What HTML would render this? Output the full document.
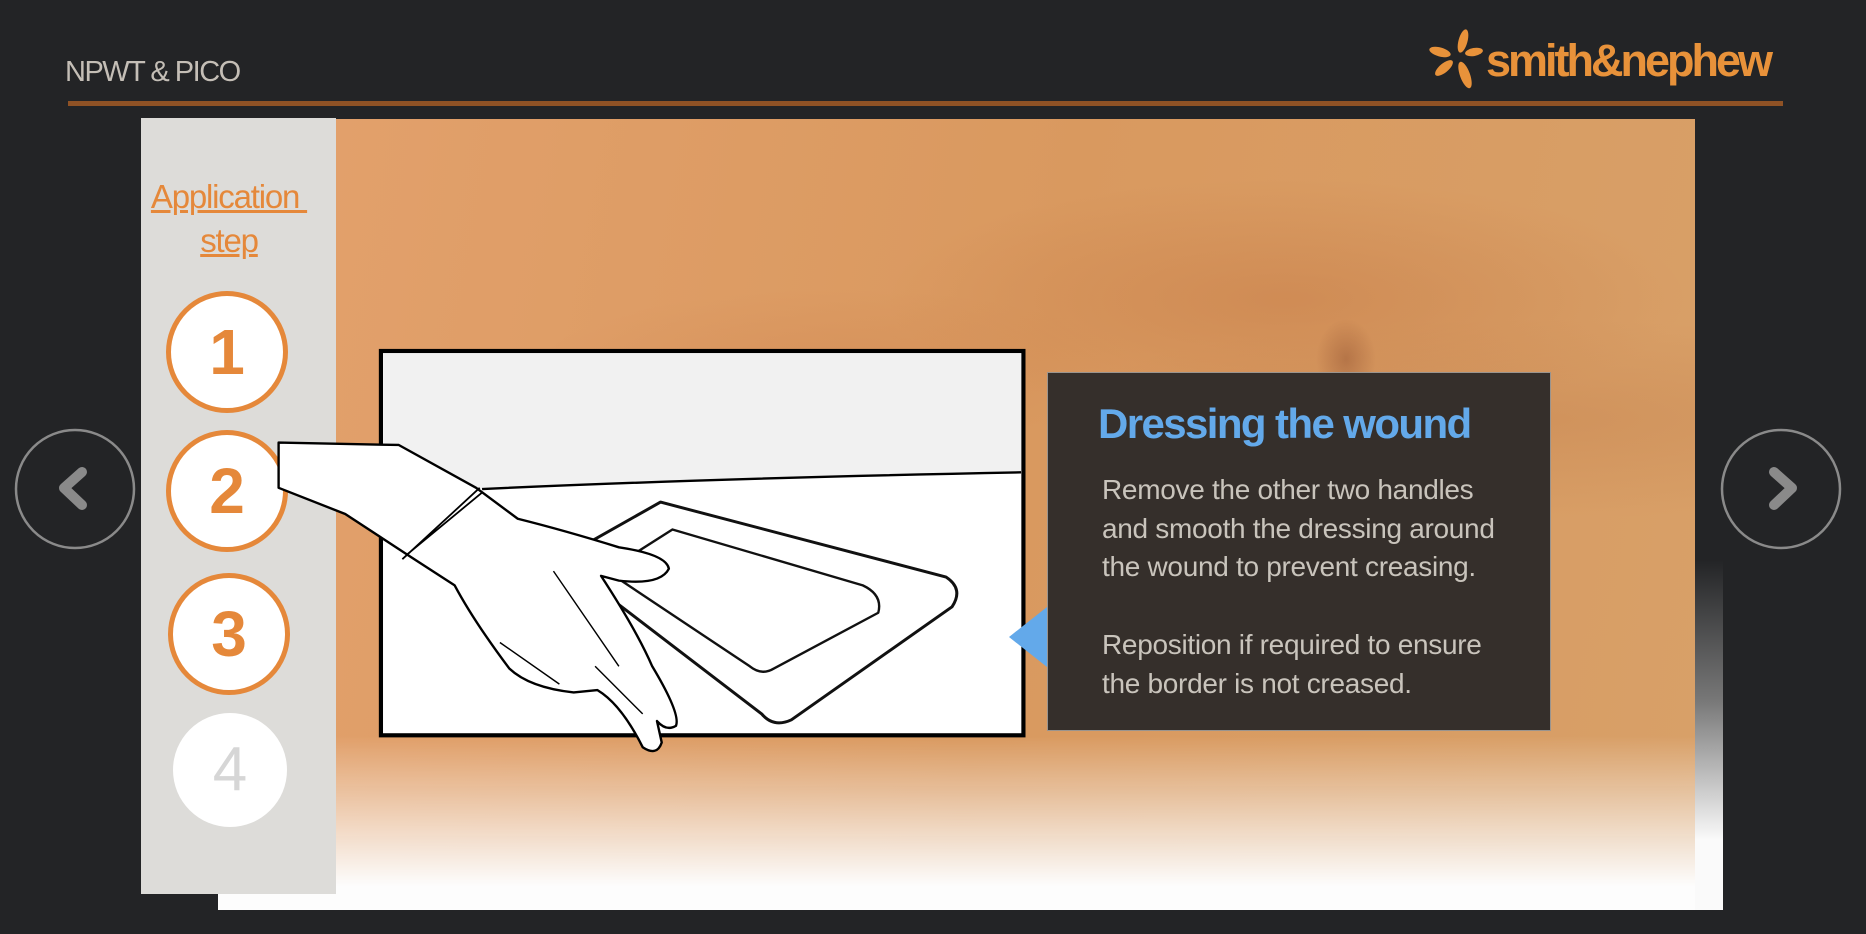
<!DOCTYPE html>
<html><head><meta charset="utf-8"><style>
*{margin:0;padding:0;box-sizing:border-box}
body{width:1866px;height:934px;background:#232426;position:relative;overflow:hidden;font-family:"Liberation Sans",sans-serif}
.abs{position:absolute}
</style></head><body>
<div class="abs" style="left:65px;top:56px;font-size:29px;color:#c4beb6;letter-spacing:-1.5px">NPWT &amp; PICO</div>
<div class="abs" style="left:68px;top:101px;width:1715px;height:5px;background:#8f5225"></div>
<svg class="abs" style="left:1420px;top:25px" width="80" height="70" viewBox="0 0 80 70">
<g fill="#e8923a">
<ellipse cx="43" cy="16" rx="4.5" ry="12" transform="rotate(15 43 16)"/>
<ellipse cx="20" cy="27" rx="11" ry="4.5" transform="rotate(15 20 27)"/>
<ellipse cx="54" cy="27" rx="9" ry="4" transform="rotate(-10 54 27)"/>
<ellipse cx="24" cy="43" rx="11" ry="4.5" transform="rotate(-40 24 43)"/>
<ellipse cx="45" cy="50" rx="5" ry="14" transform="rotate(-20 45 50)"/>
</g></svg>
<div class="abs" style="left:1486px;top:35px;font-size:45px;font-weight:bold;color:#e8923a;letter-spacing:-3px">smith&amp;nephew</div>

<div class="abs" style="left:218px;top:560px;width:1505px;height:350px;background:#fdfdfd"></div>
<div class="abs" style="left:1695px;top:560px;width:28px;height:350px;background:linear-gradient(#232426,#777 40%,#fafafa 80%)"></div>
<div class="abs" style="left:336px;top:119px;width:1359px;height:791px;background:
radial-gradient(ellipse 400px 120px at 950px 180px,rgba(190,110,60,.35),transparent),
radial-gradient(ellipse 500px 100px at 1200px 300px,rgba(190,120,70,.3),transparent),
radial-gradient(ellipse 300px 80px at 500px 250px,rgba(200,120,70,.25),transparent),
radial-gradient(ellipse 30px 40px at 1010px 240px,rgba(140,80,50,.5),transparent),
linear-gradient(100deg,#e2a06b,#d9995f 50%,#d8a068);
-webkit-mask-image:linear-gradient(#000 78%,transparent 97%);mask-image:linear-gradient(#000 78%,transparent 97%)"></div>

<div class="abs" style="left:141px;top:118px;width:195px;height:776px;background:#dddcd9"></div>
<div class="abs" style="left:144px;top:175px;width:170px;text-align:center;font-size:33px;line-height:44px;color:#e5883a;text-decoration:underline;letter-spacing:-1.2px">Application&nbsp;<br>step</div>
<div class="abs" style="left:166px;top:291px;width:122px;height:122px;border-radius:50%;border:5px solid #e5883a;background:#fff;text-align:center;font-size:64px;line-height:112px;font-weight:bold;color:#e5883a">1</div>
<div class="abs" style="left:166px;top:430px;width:122px;height:122px;border-radius:50%;border:5px solid #e5883a;background:#fff;text-align:center;font-size:64px;line-height:112px;font-weight:bold;color:#e5883a">2</div>
<div class="abs" style="left:168px;top:573px;width:122px;height:122px;border-radius:50%;border:5px solid #e5883a;background:#fff;text-align:center;font-size:64px;line-height:112px;font-weight:bold;color:#e5883a">3</div>
<div class="abs" style="left:173px;top:713px;width:114px;height:114px;border-radius:50%;background:#fff;text-align:center;font-size:62px;line-height:114px;color:#d6d6d6">4</div>

<svg class="abs" style="left:0;top:0" width="1866" height="934" viewBox="0 0 1568 785">
<rect x="320" y="295" width="540" height="323" fill="#fff" stroke="#000" stroke-width="3.5"/>
<path d="M322,297 L858,297 L858,397 Q600,402 405,411 L322,411 Z" fill="#f1f1f1"/>
<path d="M405,411 Q600,402 858,397" fill="none" stroke="#000" stroke-width="2"/>
<path d="M555,422 L795,485 Q810,495 800,510 L665,605 Q650,612 640,600 L470,470 Z" fill="#fff" stroke="#111" stroke-width="2.5" stroke-linejoin="round"/>
<path d="M565,445 L725,492 Q742,500 738,515 L650,562 Q640,568 630,560 L510,480 Z" fill="none" stroke="#111" stroke-width="2" stroke-linejoin="round"/>
<path d="M234,372 L335,374 L400,410 L435,436 Q475,446 520,460 Q560,466 562,478 Q555,492 520,488 L505,484 Q535,530 548,560 Q572,600 568,610 Q560,615 552,606 L556,624 Q552,636 540,628 Q522,592 502,580 L482,582 Q445,578 428,562 Q398,522 382,492 L345,468 L290,432 L234,410 Z" fill="#fff" stroke="#000" stroke-width="2" stroke-linejoin="round"/>
<path d="M338,470 L403,410 M342,466 L405,414" stroke="#000" stroke-width="1.5" fill="none"/>
<path d="M465,480 L520,560 M420,540 L470,575 M500,560 L540,600" stroke="#000" stroke-width="1.2" fill="none"/>
</svg>

<svg class="abs" style="left:1009px;top:607px" width="40" height="60"><path d="M0,30 L38,0 L38,60 Z" fill="#63a9ea"/></svg>
<div class="abs" style="left:1047px;top:372px;width:504px;height:359px;background:#352f2b;border:1px solid #9a948e"></div>
<div class="abs" style="left:1098px;top:400px;font-size:42px;font-weight:bold;color:#63a9ea;letter-spacing:-1.6px">Dressing the wound</div>
<div class="abs" style="left:1102px;top:471px;font-size:28px;line-height:38.7px;color:#c9c4bc;letter-spacing:-0.3px;white-space:nowrap">Remove the other two handles<br>and smooth the dressing around<br>the wound to prevent creasing.<br><br>Reposition if required to ensure<br>the border is not creased.</div>

<svg class="abs" style="left:0;top:420px" width="160" height="140"><circle cx="75" cy="69" r="59" fill="none" stroke="#8a8a8a" stroke-width="2.5"/><path d="M82,52 L64,68 L82,85" fill="none" stroke="#8a8a8a" stroke-width="10" stroke-linecap="round" stroke-linejoin="round"/></svg>
<svg class="abs" style="left:1706px;top:420px" width="160" height="140"><circle cx="75" cy="69" r="59" fill="none" stroke="#8a8a8a" stroke-width="2.5"/><path d="M68,52 L86,68 L68,85" fill="none" stroke="#8a8a8a" stroke-width="10" stroke-linecap="round" stroke-linejoin="round"/></svg>
</body></html>
